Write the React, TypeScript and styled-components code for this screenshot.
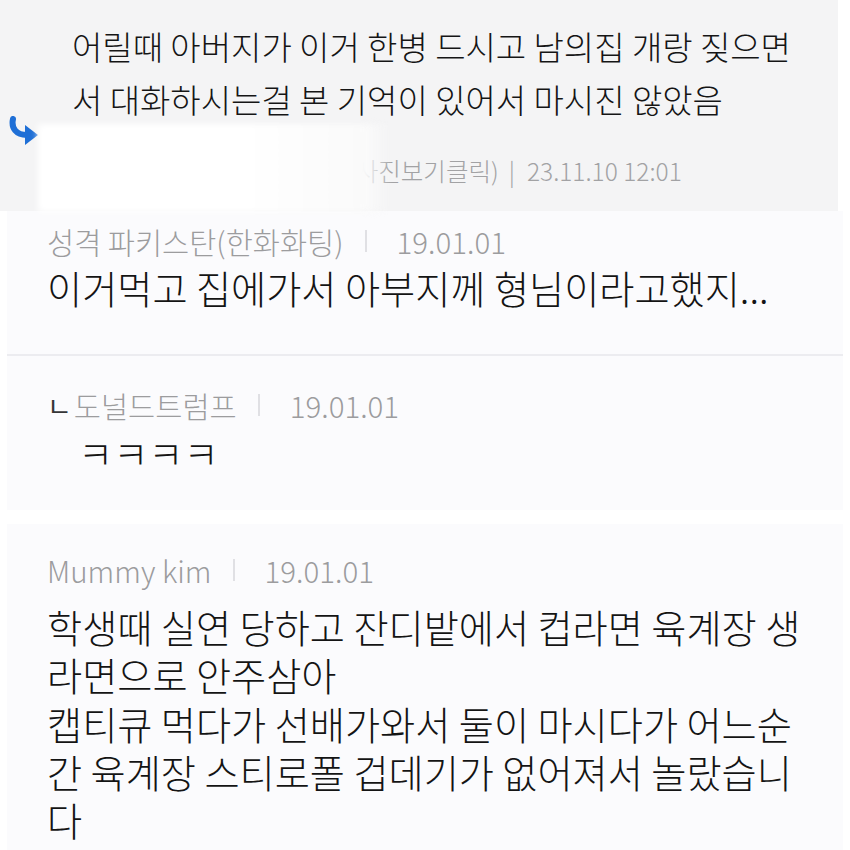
import React, { FC } from "react";
import styled, { createGlobalStyle } from "styled-components";

const GlobalStyle = createGlobalStyle`
  body {
    margin: 0;
    background: #ffffff;
    font-family: "Noto Sans CJK KR", "Noto Sans", sans-serif;
    color: #141414;
  }
`;

const Page = styled.div`
  width: 850px;
  height: 850px;
  overflow: hidden;
  background: #ffffff;
`;

const ReplyBlock = styled.div`
  position: relative;
  width: 838px;
  height: 211px;
  box-sizing: border-box;
  padding: 20px 0 0 72px;
  background: #f4f4f5;
`;

const ReplyText = styled.div`
  font-size: 33px;
  font-weight: 300;
  line-height: 53px;
  color: #151515;
`;

const ReplyArrow = styled.svg`
  position: absolute;
  left: 8px;
  top: 116px;
`;

const ReplyMeta = styled.div`
  margin-top: 30px;
  padding-left: 276px;
  font-size: 24.5px;
  font-weight: 300;
  line-height: 30px;
  color: #a2a2a4;
`;

const Pipe = styled.span`
  margin: 0 12px 0 10px;
`;

const Blur = styled.div`
  position: absolute;
  z-index: 1;
  left: 38px;
  top: 124px;
  width: 352px;
  height: 88px;
  background: linear-gradient(
    to right,
    #ffffff 0%,
    #ffffff 58%,
    #fafafa 93%,
    rgba(250, 250, 250, 0) 100%
  );
  filter: blur(3px);
`;

const Panel = styled.div<{ $height: number; $gap?: number; $top: number }>`
  margin: ${(p) => p.$gap ?? 0}px 7px 0 7px;
  height: ${(p) => p.$height}px;
  box-sizing: border-box;
  padding: ${(p) => p.$top}px 0 0 40px;
  background: #fbfbfd;
`;

const Divider = styled.div`
  margin: 0 7px;
  height: 2px;
  background: #ececf0;
`;

const MetaRow = styled.div`
  display: flex;
  align-items: center;
  height: 36px;
  font-size: 29.5px;
  font-weight: 300;
  color: #9c9c9e;
`;

const Sep = styled.span`
  display: inline-block;
  width: 2px;
  height: 22px;
  margin: 0 30px 0 21px;
  background: #e0e0e4;
`;

const Corner = styled.span`
  margin-right: 2px;
  color: #353537;
  font-size: 27px;
  font-weight: 400;
`;

const Body = styled.div<{ $indent?: number; $top?: number }>`
  margin-top: ${(p) => p.$top ?? 0}px;
  padding-left: ${(p) => p.$indent ?? 0}px;
  font-size: 38.2px;
  font-weight: 300;
  line-height: 48.3px;
  color: #141414;
`;

const Meta: FC<{ name: string; date: string; reply?: boolean }> = ({
  name,
  date,
  reply,
}) => (
  <MetaRow>
    {reply && <Corner>ㄴ</Corner>}
    <span>{name}</span>
    <Sep />
    <span>{date}</span>
  </MetaRow>
);

const lastLines = [
  "학생때 실연 당하고 잔디밭에서 컵라면 육계장 생",
  "라면으로 안주삼아",
  "캡티큐 먹다가 선배가와서 둘이 마시다가 어느순",
  "간 육계장 스티로폴 겁데기가 없어져서 놀랐습니",
  "다",
];

export default function App() {
  return (
    <Page>
      <GlobalStyle />
      <ReplyBlock>
        <ReplyText>
          어릴때 아버지가 이거 한병 드시고 남의집 개랑 짖으면
          <br />서 대화하시는걸 본 기억이 있어서 마시진 않았음
        </ReplyText>
        <ReplyMeta>
          (사진보기클릭)<Pipe>|</Pipe>23.11.10 12:01
        </ReplyMeta>
        <Blur />
        <ReplyArrow width="32" height="30" viewBox="0 0 32 30">
          <path
            d="M5 3 C3 12 8 19 19 19"
            fill="none"
            stroke="#1f6fd6"
            strokeWidth="6"
            strokeLinecap="round"
          />
          <path d="M17 9 L30 19 L17 29 Z" fill="#1f6fd6" />
        </ReplyArrow>
      </ReplyBlock>

      <Panel $height={143} $top={12}>
        <Meta name="성격 파키스탄(한화화팅)" date="19.01.01" />
        <Body $top={5}>이거먹고 집에가서 아부지께 형님이라고했지...</Body>
      </Panel>
      <Divider />
      <Panel $height={154} $top={31}>
        <Meta reply name="도널드트럼프" date="19.01.01" />
        <Body $indent={31} $top={6}>
          ㅋㅋㅋㅋ
        </Body>
      </Panel>
      <Panel $height={330} $gap={14} $top={28}>
        <Meta name="Mummy kim" date="19.01.01" />
        <Body $top={15}>
          {lastLines.map((line) => (
            <div key={line}>{line}</div>
          ))}
        </Body>
      </Panel>
    </Page>
  );
}
